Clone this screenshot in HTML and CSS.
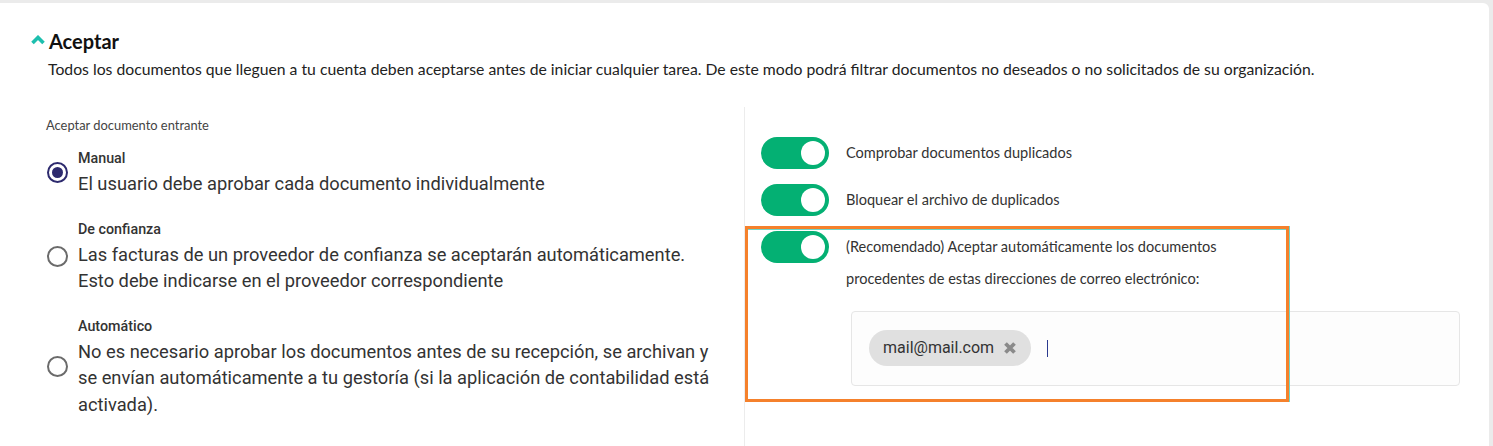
FILE: index.html
```html
<!DOCTYPE html>
<html lang="es">
<head>
<meta charset="utf-8">
<title>Aceptar</title>
<link rel="stylesheet" href="styles.css">
</head>
<body>
<div class="card">
  <div class="section-head">
    <svg class="chevron" width="14" height="10" viewBox="0 0 14 10"><path d="M1.5 8 L7 2.5 L12.5 8" fill="none" stroke="#1dbfae" stroke-width="3.6"/></svg>
    <h2 class="title">Aceptar</h2>
  </div>
  <p class="desc">Todos los documentos que lleguen a tu cuenta deben aceptarse antes de iniciar cualquier tarea. De este modo podrá filtrar documentos no deseados o no solicitados de su organización.</p>
  <div class="body">
    <div class="col-left">
      <div class="field-label">Aceptar documento entrante</div>
      <div class="options">
        <label class="option">
          <span class="radio checked"></span>
          <span class="opt-text">
            <span class="opt-title">Manual</span>
            <span class="opt-desc">El usuario debe aprobar cada documento individualmente</span>
          </span>
        </label>
        <label class="option">
          <span class="radio"></span>
          <span class="opt-text">
            <span class="opt-title">De confianza</span>
            <span class="opt-desc">Las facturas de un proveedor de confianza se aceptarán automáticamente. Esto debe indicarse en el proveedor correspondiente</span>
          </span>
        </label>
        <label class="option">
          <span class="radio"></span>
          <span class="opt-text">
            <span class="opt-title">Automático</span>
            <span class="opt-desc">No es necesario aprobar los documentos antes de su recepción, se archivan y se envían automáticamente a tu gestoría (si la aplicación de contabilidad está activada).</span>
          </span>
        </label>
      </div>
    </div>
    <div class="col-right">
      <div class="toggle-row">
        <span class="toggle"><span class="knob"></span></span>
        <span class="toggle-text">Comprobar documentos duplicados</span>
      </div>
      <div class="toggle-row">
        <span class="toggle"><span class="knob"></span></span>
        <span class="toggle-text">Bloquear el archivo de duplicados</span>
      </div>
      <div class="toggle-row">
        <span class="toggle"><span class="knob"></span></span>
        <div class="toggle-text">
          <div>(Recomendado) Aceptar automáticamente los documentos<br>procedentes de estas direcciones de correo electrónico:</div>
          <div class="tag-input">
            <span class="chip">mail@mail.com <svg class="chip-x" width="14" height="14" viewBox="0 0 14 14"><path d="M2.5 2.5 L11.5 11.5 M11.5 2.5 L2.5 11.5" stroke="#8a8a8a" stroke-width="3.8" stroke-linecap="butt"/></svg></span>
            <span class="caret"></span>
          </div>
        </div>
      </div>
      <div class="highlight"></div>
    </div>
  </div>
</div>
</body>
</html>
```

FILE: styles.css
```css
html, body {
  margin: 0;
  padding: 0;
  background: #ebebeb;
  height: 100%;
  overflow: hidden;
}
.card {
  margin-top: 3px;
  width: 1489px;
  height: 460px;
  background: #fff;
  border-top-right-radius: 6px;
  padding: 25px 0 0 31px;
  box-sizing: border-box;
  font-family: Lato, "Noto Sans", sans-serif;
}
.section-head {
  display: flex;
  align-items: center;
  gap: 4px;
  height: 26px;
}
.chevron { display: block; margin-top: -3px; }
.title {
  margin: 0;
  font-size: 20px;
  font-weight: 700;
  color: #111;
  line-height: 26px;
}
.desc {
  margin: 3px 0 0 17px;
  font-size: 15.75px;
  line-height: 24px;
  color: #222;
}
.body {
  margin-top: 26px;
  display: grid;
  grid-template-columns: 713px 1fr;
  min-height: 350px;
}
.col-left {
  padding: 10px 28px 0 15px;
}
.field-label {
  font-size: 12.9px;
  line-height: 16px;
  color: #444;
}
.options {
  margin-top: 15px;
  display: flex;
  flex-direction: column;
  gap: 21px;
  font-family: Roboto, "Liberation Sans", sans-serif;
}
.option {
  display: flex;
  align-items: center;
  gap: 10px;
}
.radio {
  flex: none;
  width: 17px;
  height: 17px;
  border: 2px solid #6b6b6b;
  border-radius: 50%;
  margin-left: 1px;
  position: relative;
}
.radio.checked {
  border-color: #2d2a6e;
}
.radio.checked::after {
  content: "";
  position: absolute;
  left: 3px;
  top: 3px;
  width: 11px;
  height: 11px;
  border-radius: 50%;
  background: #2d2a6e;
}
.opt-text {
  display: flex;
  flex-direction: column;
  gap: 3px;
}
.opt-title {
  font-size: 14.3px;
  font-weight: 500;
  line-height: 20px;
  color: #333;
}
.opt-desc {
  font-size: 18.3px;
  line-height: 26.5px;
  color: #333;
}
.col-right {
  position: relative;
  border-left: 1px solid #ececec;
  padding: 30px 29px 0 16px;
  display: flex;
  flex-direction: column;
  gap: 15px;
}
.toggle-row {
  display: flex;
  align-items: flex-start;
  gap: 17px;
}
.toggle {
  flex: none;
  width: 68px;
  height: 32px;
  border-radius: 16px;
  background: #04b073;
  position: relative;
}
.knob {
  position: absolute;
  right: 4px;
  top: 4px;
  width: 24px;
  height: 24px;
  border-radius: 50%;
  background: #fff;
}
.toggle-text {
  flex: 1;
  font-size: 14.55px;
  line-height: 32px;
  color: #333;
}
.tag-input {
  margin: 16px 0 0 5px;
  border: 1px solid #e6e6e6;
  border-radius: 4px;
  background: #fdfdfd;
  padding: 18px 17px 19px;
  display: flex;
  align-items: center;
  gap: 16px;
}
.chip {
  display: inline-flex;
  align-items: center;
  gap: 9px;
  height: 36px;
  padding: 0 14px;
  border-radius: 18px;
  background: #e0e0e0;
  font-family: Roboto, "Liberation Sans", sans-serif;
  font-size: 16px;
  color: #333;
}
.chip-x {
  display: block;
}
.caret {
  width: 1px;
  height: 17px;
  background: #2b3a8f;
}
.highlight {
  position: absolute;
  left: 0;
  top: 119px;
  width: 538px;
  height: 170px;
  border: 3px solid #f5812c;
  box-shadow: inset 0 1px 0 #6fd6cb, 1px 0 0 #6fd6cb;
  pointer-events: none;
}
```
